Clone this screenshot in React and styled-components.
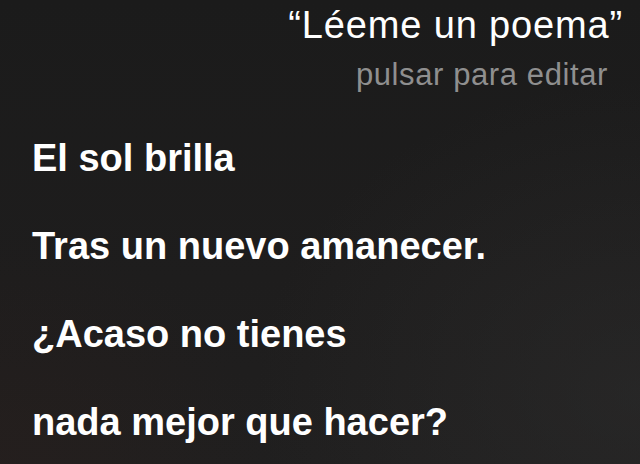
import React from 'react';
import styled, { createGlobalStyle } from 'styled-components';

const GlobalStyle = createGlobalStyle`
    html, body {
        margin: 0;
        padding: 0;
        background: #1c1c1c;
    }
`

const Screen = styled.div`
    width: 640px;
    height: 464px;
    overflow: hidden;
    box-sizing: border-box;
    padding-top: 1px;
    display: flex;
    flex-direction: column;
    font-family: "Liberation Sans", Arial, Helvetica, sans-serif;
    color: #ffffff;
    background:
        radial-gradient(ellipse 60% 70% at 0% 100%, rgba(45, 30, 27, 0.35), rgba(45, 30, 27, 0) 70%),
        radial-gradient(ellipse 80% 90% at 100% 85%, rgba(48, 48, 48, 0.45), rgba(48, 48, 48, 0) 75%),
        linear-gradient(180deg, #1b1b1b 0%, #1e1d1d 60%, #201f1f 100%);
`

const Request = styled.div`
    display: flex;
    flex-direction: column;
    align-items: flex-end;
`

const Quote = styled.div`
    font-size: 38px;
    line-height: 48px;
    letter-spacing: 0.85px;
    padding-right: 17px;
    white-space: nowrap;
`

const EditHint = styled.div`
    margin-top: 6px;
    font-size: 31px;
    line-height: 40px;
    letter-spacing: 0.6px;
    color: #8f8f8f;
    padding-right: 32px;
    white-space: nowrap;
`

const Poem = styled.div`
    margin-top: 19px;
    padding-left: 32px;
    display: flex;
    flex-direction: column;
`

const Verse = styled.div`
    font-size: 38px;
    font-weight: bold;
    line-height: 88px;
    letter-spacing: 0;
    white-space: nowrap;
`

const verses = [
    'El sol brilla',
    'Tras un nuevo amanecer.',
    '¿Acaso no tienes',
    'nada mejor que hacer?'
]

const App = () => {
    return (
        <Screen>
            <GlobalStyle />
            <Request>
                <Quote>“Léeme un poema”</Quote>
                <EditHint>pulsar para editar</EditHint>
            </Request>
            <Poem>
                {verses.map(v => <Verse key={v}>{v}</Verse>)}
            </Poem>
        </Screen>
    )
}

export default App
